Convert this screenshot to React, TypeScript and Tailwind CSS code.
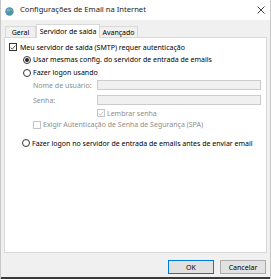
import type { JSX } from "react";

const font = { fontFamily: '"Noto Sans", "Open Sans", sans-serif' };

function CheckBox({ checked, disabled }: { checked?: boolean; disabled?: boolean }): JSX.Element {
  const border = disabled ? "border-[#c4c4c4]" : "border-[#333333]";
  return (
    <span className={`flex h-[8px] w-[8px] shrink-0 items-center justify-center border bg-white ${border}`}>
      {checked ? (
        <svg width="7" height="7" viewBox="0 0 7 7">
          <path
            d="M0.8 3.6 L2.7 5.5 L6.3 1.2"
            fill="none"
            stroke={disabled ? "#bcbcbc" : "#222222"}
            strokeWidth="0.9"
          />
        </svg>
      ) : null}
    </span>
  );
}

function Radio({ checked }: { checked?: boolean }): JSX.Element {
  return (
    <span className="flex h-[8px] w-[8px] shrink-0 items-center justify-center rounded-full border border-[#333333] bg-white">
      {checked ? <span className="h-[4px] w-[4px] rounded-full bg-[#222222]" /> : null}
    </span>
  );
}

function GlobeIcon(): JSX.Element {
  return (
    <svg width="9" height="9" viewBox="0 0 9 9">
      <circle cx="4.5" cy="4.5" r="4.2" fill="#4a90c8" />
      <path d="M2 2.2 C3 1.6 4 2.4 3.6 3.4 C3.2 4.2 2.2 4.6 2.4 5.8 C1.4 5.2 1.2 3.2 2 2.2 Z" fill="#6cb04a" />
      <path d="M5.2 1.2 C6.6 1.6 7.8 2.8 7.8 4.4 C7 4.2 6.2 3.6 5.6 3.2 C5.2 2.6 5 1.8 5.2 1.2 Z" fill="#7cc05a" />
      <path d="M4.6 6 C5.6 5.6 6.8 6 7.2 6.6 C6.4 7.8 5.2 8.3 4.2 8.2 C4.2 7.4 4.2 6.6 4.6 6 Z" fill="#5aa048" />
      <circle cx="3.4" cy="3" r="1.6" fill="#ffffff" opacity="0.25" />
    </svg>
  );
}

export default function App(): JSX.Element {
  return (
    <div
      className="flex h-[279px] w-[271px] flex-col overflow-hidden whitespace-nowrap border-l border-r border-[#c8c8c8] bg-[#f0f0f0] text-[7px] leading-none text-black"
      style={font}
    >
      <div className="flex h-[20px] shrink-0 items-center bg-white">
        <span className="ml-[4px] mt-[2px] flex">
          <GlobeIcon />
        </span>
        <span className="ml-[6px] text-[7.6px] text-[#1a1a1a]">Configurações de Email na Internet</span>
        <span className="ml-auto mr-[5px] flex">
          <svg width="8" height="8" viewBox="0 0 8 8">
            <path d="M0.5 0.5 L7.5 7.5 M7.5 0.5 L0.5 7.5" stroke="#333333" strokeWidth="0.9" />
          </svg>
        </span>
      </div>

      <div className="mt-[4px] flex h-[13px] shrink-0 items-end pl-[4px]">
        <div className="flex h-[11px] w-[31px] items-center justify-center border border-b-0 border-[#d9d9d9] bg-[#f0f0f0]">
          Geral
        </div>
        <div className="relative z-10 -mb-px flex h-[14px] w-[64px] items-center justify-center border border-b-0 border-[#d9d9d9] bg-white pb-[1px]">
          Servidor de saída
        </div>
        <div className="flex h-[11px] w-[38px] items-center justify-center border border-b-0 border-l-0 border-[#d9d9d9] bg-[#f0f0f0]">
          Avançado
        </div>
      </div>

      <div className="mx-[3px] flex h-[216px] shrink-0 flex-col border border-[#d9d9d9] bg-white">
        <div className="mt-[3px] flex h-[12px] items-center gap-[3px] pl-[4px]">
          <CheckBox checked />
          <span>Meu servidor de saída (SMTP) requer autenticação</span>
        </div>
        <div className="flex h-[13px] items-center gap-[2px] pl-[18px]">
          <Radio checked />
          <span>Usar mesmas config. do servidor de entrada de emails</span>
        </div>
        <div className="flex h-[13px] items-center gap-[2px] pl-[18px]">
          <Radio />
          <span>Fazer logon usando</span>
        </div>
        <div className="mt-[1px] flex h-[10px] items-center pl-[28px] pr-[5px]">
          <span className="w-[64px] text-[#8d8d8d]">Nome de usuário:</span>
          <span className="h-[10px] flex-1 border border-[#cccccc] bg-[#f0f0f0]" />
        </div>
        <div className="mt-[5px] flex h-[10px] items-center pl-[28px] pr-[5px]">
          <span className="w-[64px] text-[#8d8d8d]">Senha:</span>
          <span className="h-[10px] flex-1 border border-[#cccccc] bg-[#f0f0f0]" />
        </div>
        <div className="mt-[2px] flex h-[12px] items-center gap-[2px] pl-[92px] text-[#8d8d8d]">
          <CheckBox checked disabled />
          <span>Lembrar senha</span>
        </div>
        <div className="flex h-[11px] items-center gap-[2px] pl-[28px] text-[#8d8d8d]">
          <CheckBox disabled />
          <span>Exigir Autenticação de Senha de Segurança (SPA)</span>
        </div>
        <div className="mt-[7px] flex h-[12px] items-center gap-[2px] pl-[17px]">
          <Radio />
          <span>Fazer logon no servidor de entrada de emails antes de enviar email</span>
        </div>
      </div>

      <div className="mt-[7px] flex h-[14px] shrink-0 justify-end gap-[6px] pr-[4px]">
        <button
          type="button"
          className="flex h-[14px] w-[46px] items-center justify-center border border-[#0078d7] bg-[#e1e1e1] text-[7px]"
        >
          OK
        </button>
        <button
          type="button"
          className="flex h-[14px] w-[46px] items-center justify-center border border-[#adadad] bg-[#e1e1e1] text-[7px]"
        >
          Cancelar
        </button>
      </div>

      <div className="mt-auto h-[2px] shrink-0 bg-[#3a3a3a]" />
    </div>
  );
}
